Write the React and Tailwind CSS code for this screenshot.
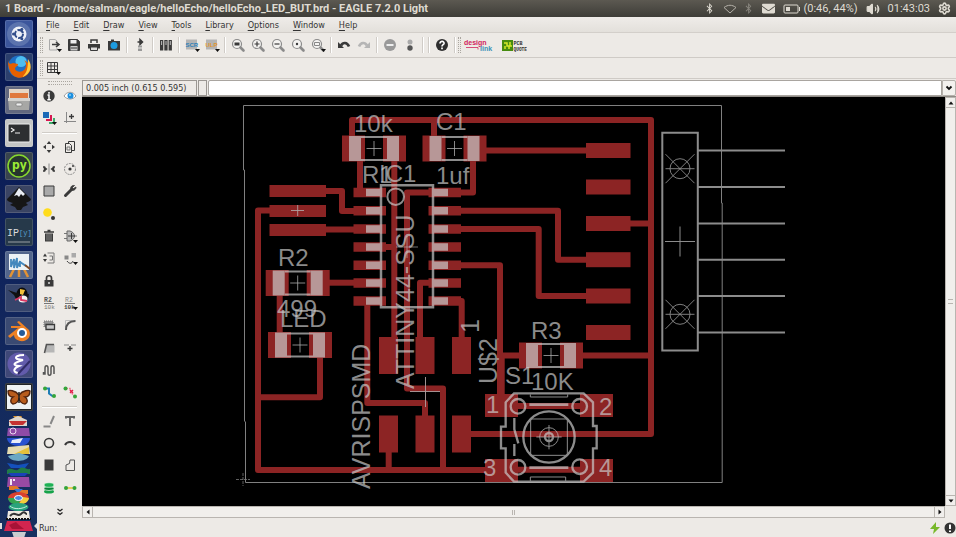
import { FaBluetoothB, FaEnvelope } from "react-icons/fa";
import { Settings, Volume2 } from "lucide-react";

const DARK = "#3a3a3a";
const COPPER = "#8c2424";
const SILK = "#cbcbcb";

const Glyph = ({ children }) => (
  <svg viewBox="0 0 16 16" className="size-4 shrink-0" fill="none" stroke={DARK}>
    {children}
  </svg>
);

// small triangle in the corner of buttons that open a menu
const Drop = () => <path d="M11 12h5l-2.500 3z" fill="#111" stroke="none" />;

const Lens = ({ children }) => (
  <Glyph>
    <g stroke="#8b8b8b">
      <circle cx="7" cy="7" r="4.500" fill="#f4f3f1" strokeWidth="1.200" />
      <path d="M10.500 10.500l3 3" strokeWidth="2.600" strokeLinecap="round" />
    </g>
    {children}
  </Glyph>
);

/* ---------- top toolbar ---------- */

const toolbar = [
  [
    ["Open", <Glyph><path d="M9 2.500H3.500v10.500H11V11M11 5V4L9 2.500" stroke="#aaa" /><path d="M6 7.500h6M10 5l3 2.500-3 2.500" strokeWidth="1.600" /><Drop /></Glyph>],
    ["Save", <Glyph><path d="M2.500 2.500h9l2 2v9h-11z" fill={DARK} /><path d="M4.500 3h6v3.500h-6z" fill="#eee" stroke="none" /><path d="M4.500 9h7v4.500h-7z" fill="#ccc" stroke="none" /><path d="M5 11h6" /></Glyph>],
    ["Print", <Glyph><path d="M5 6V3h6v3" fill="#eee" strokeWidth="1.500" /><path d="M2 7h12v4.500H2z" fill={DARK} stroke="none" /><path d="M4.500 10h7v3.500h-7z" fill="#ddd" /></Glyph>],
    ["CAM processor", <Glyph><path d="M2 4h3V2.500h3V4h6v9.500H2z" fill={DARK} stroke="none" /><circle cx="8" cy="8.500" r="3.500" fill="#1d9be0" stroke="none" /></Glyph>],
  ],
  [["Switch to schematic", <Glyph><path d="M5.500 5h4M8 2.500L10.500 5 8 7.500z" fill={DARK} strokeWidth="1.500" /><path d="M6 8.500h4v2H6zM6 11.500h4v2.500H6z" fill="#999" stroke="none" /></Glyph>]],
  [["Use library", <Glyph><path d="M2 3h3.300v10.500H2zM6.300 3h3.300v10.500H6.300zM10.600 3h3.300v10.500h-3.300z" fill={DARK} stroke="none" /><path d="M3.600 4v4M8 4v4M12.300 4v4" stroke="#bbb" /></Glyph>]],
  [
    ["Execute script", <Glyph><path d="M2 2.500h11v10H2z" fill="#b4b4b4" stroke="none" /><text x="1.500" y="10" fontSize="6" fontWeight="700" fill="#2c7fb8" stroke="none" fontFamily="Liberation Sans, sans-serif">SCR</text><Drop /></Glyph>],
    ["Run ULP", <Glyph><path d="M2 2.500h11v10H2z" fill="#b4b4b4" stroke="none" /><text x="1.500" y="10" fontSize="6" fontWeight="700" fill="#e2952b" stroke="none" fontFamily="Liberation Sans, sans-serif">ULP</text><Drop /></Glyph>],
  ],
  [
    ["Zoom to fit", <Lens><path d="M4.500 5.500h5v3h-5z" fill={DARK} stroke="none" /></Lens>],
    ["Zoom in", <Lens><path d="M4.500 7h5M7 4.500v5" strokeWidth="1.200" /></Lens>],
    ["Zoom out", <Lens><path d="M4.500 7h5" strokeWidth="1.200" /></Lens>],
    ["Redraw", <Lens><circle cx="7" cy="7" r="1.200" fill={DARK} stroke="none" /></Lens>],
    ["Select area", <Lens><path d="M4.500 5.500h5v3h-5z" stroke="#888" /><Drop /></Lens>],
  ],
  [
    ["Undo", <Glyph><path d="M5 8.500c2-3.500 6-3.500 8 1" strokeWidth="2.700" /><path d="M2 5v6h6z" fill={DARK} stroke="none" /></Glyph>],
    ["Redo", <Glyph><path d="M11 8.500c-2-3.500-6-3.500-8 1" stroke="#b5b5b5" strokeWidth="2.700" /><path d="M14 5v6H8z" fill="#b5b5b5" stroke="none" /></Glyph>],
  ],
  [
    ["Cancel", <Glyph><circle cx="8" cy="8" r="6" fill="#999" stroke="none" /><path d="M4.500 8h7" stroke="#eee" strokeWidth="2" /></Glyph>],
    ["Go", <Glyph><circle cx="8" cy="5" r="2.500" fill="#aaa" stroke="none" /><circle cx="8" cy="11" r="2.700" fill="#555" stroke="none" /></Glyph>],
  ],
  [],
  [["Help", <Glyph><circle cx="8" cy="8" r="6" fill="#2e2e2e" stroke="none" /><path d="M6 6.500c0-3 4.500-2.500 4 0-.3 1.300-2 1.200-2 3M8 10.500v1.800" stroke="#fff" strokeWidth="1.700" /></Glyph>]],
];

/* ---------- left palette ---------- */

const dot = (x, y, c = DARK, r = 1.7) => <circle cx={x} cy={y} r={r} fill={c} stroke="none" />;

const palette = [
  [
    ["Info", <Glyph><circle cx="8" cy="8" r="5.700" fill={DARK} stroke="none" /><path d="M8 4v1.800M6.500 7H8v4.500M6.300 11.700h3.500" stroke="#fff" strokeWidth="1.500" /></Glyph>],
    ["Show", <Glyph><path d="M2 8c3-5 9-5 12 0-3 4-9 4-12 0z" fill="#fff" stroke="#999" />{dot(8.5, 7.8, "#1a8fe0", 3)}{dot(8, 7, "#8fd0f5", 1)}</Glyph>],
    ["Display", <Glyph><path d="M2 2h6v6H2z" fill="#1b69b6" stroke="none" /><path d="M10 5v5H5" stroke="#d6174f" strokeWidth="2" /><path d="M13 8v5H8" stroke="#3eaa6b" strokeWidth="2" /><Drop /></Glyph>],
    ["Mark", <Glyph><path d="M4.500 2v11M2 11.500h12" stroke="#888" /><path d="M9.500 4v5M7 6.500h5" strokeWidth="1.300" /></Glyph>],
  ],
  [
    ["Move", <Glyph><path d="M8 2l2.300 3H5.700zM8 14l2.300-3H5.700zM2 8l3-2.300v4.600zM14 8l-3-2.300v4.600z" fill={DARK} stroke="none" /></Glyph>],
    ["Copy", <Glyph><path d="M6.500 2.500h6v9h-6z" /><path d="M3.500 4.500h4l2 2v7h-6z" fill="#eeebe7" /><path d="M5 8h3v3H5z" stroke="#777" /></Glyph>],
    ["Mirror", <Glyph><path d="M8 2.500v11" stroke="#888" /><path d="M2 6h1.500v4H2M14 6h-1.500v4H14" strokeWidth="1.500" /><path d="M4 6v4l2.500-2zM12 6v4L9.500 8z" fill={DARK} stroke="none" /></Glyph>],
    ["Rotate", <Glyph><circle cx="8" cy="8" r="5.500" stroke="#888" strokeDasharray="2 1" />{dot(8, 8, DARK, 1.6)}{dot(11, 5, DARK, 1)}</Glyph>],
    ["Group", <Glyph><path d="M3 3h10v10H3z" fill="#a9a9a9" /></Glyph>],
    ["Change", <Glyph><path d="M3.500 12.500l6-6" strokeWidth="3" strokeLinecap="round" /><path d="M12.500 2.500C9 2 8 5 9 7c2 1 5 0 5-3l-2.500 1.500-1-1z" fill={DARK} strokeWidth=".8" /></Glyph>],
    ["Paste", <Glyph>{dot(6.5, 6.5, "#ffdc1c", 4.3)}{dot(12, 12, "#333", 2)}</Glyph>],
    null,
    ["Delete", <Glyph><path d="M3 4h10M6.500 2.500h3" strokeWidth="1.600" /><path d="M4 5.500h8v8H4z" fill={DARK} stroke="none" /><path d="M6 6v6.500M8 6v6.500M10 6v6.500" stroke="#aaa" strokeWidth=".7" /></Glyph>],
    ["Add", <Glyph><path d="M2 5.500h4M2 10.500h4M12 8h3" stroke="#777" /><path d="M5 3h3c6 2 6 8 0 10H5z" fill="#bbb" stroke="#666" /><path d="M6 8h7M9.500 5v6" /><Drop /></Glyph>],
    ["Pinswap", <Glyph><path d="M4 3.500l2 3H2zM4 12l2-3H2z" fill={DARK} stroke="none" /><path d="M6.500 3H13v10H6.500M8.500 6h3v4h-3" stroke="#777" /></Glyph>],
    ["Replace", <Glyph><path d="M2.500 5.500h4v4h-4z" fill="#888" stroke="none" /><path d="M9.500 3h4.500v4.500H9.500z" fill="#aaa" stroke="none" /><path d="M5 11c2 3 5 3 6 0" /><Drop /></Glyph>],
    ["Lock", <Glyph><path d="M5.500 7V5c0-3 5-3 5 0v2" strokeWidth="1.700" /><path d="M3.500 7h9v6.500h-9z" fill={DARK} stroke="none" />{dot(8, 10, "#ddd", 1)}</Glyph>],
    null,
    ["Name", <Glyph><text x="3" y="7" fontSize="6.500" fontWeight="700" fill="#555" stroke="none" fontFamily="Liberation Mono, monospace">R2</text><path d="M3 8.500h10" stroke="#777" /><text x="3" y="14" fontSize="6" fill="#777" stroke="none" fontFamily="Liberation Mono, monospace">10k</text></Glyph>],
    ["Value", <Glyph><text x="3" y="7" fontSize="6.500" fill="#888" stroke="none" fontFamily="Liberation Mono, monospace">R2</text><path d="M3 8.500h10" stroke="#777" /><text x="2" y="14" fontSize="6" fontWeight="700" fill="#444" stroke="none" fontFamily="Liberation Mono, monospace">10k</text><Drop /></Glyph>],
    ["Smash", <Glyph><path d="M3 4h9v6H3z" fill="#999" stroke="#777" strokeDasharray="1 1" /><path d="M5 7.500h8.500v5H5z" fill="#c9c9c9" strokeWidth="1.300" /></Glyph>],
    ["Miter", <Glyph><path d="M3.500 13V3.500H13" stroke="#bbb" /><path d="M4 13c0-6 3-9 9.500-9" strokeWidth="2" stroke="#555" /></Glyph>],
    ["Split", <Glyph><path d="M5.500 4.500h8v8h-9z" fill="#b6b6b6" stroke="none" /><path d="M3.500 13l2-8.500H13" strokeWidth="1.600" stroke="#555" /></Glyph>],
    ["Optimize", <Glyph><path d="M2 5h5M9 5h5" stroke="#888" /><path d="M8 6v5M5.500 8.500h5" strokeWidth="1.400" /></Glyph>],
    ["Meander", <Glyph><path d="M2.500 10v2H4V6c0-3 3-3 3 0v5c0 3 3 3 3 0V6c0-3 3-3 3 0v6" strokeWidth="1.500" stroke="#555" /></Glyph>],
    null,
    ["Route", <Glyph><path d="M4 4.500h4v5l4 3" stroke="#1f7db5" strokeWidth="2" />{dot(4, 4.5, "#34a53a", 2)}{dot(13, 12, "#34a53a", 2)}</Glyph>],
    ["Ripup", <Glyph><path d="M4 4.500h4l1 4 4 4" stroke="#ee7d93" strokeWidth="1.500" strokeDasharray="2 1" />{dot(3.5, 4.5, "#34a53a", 2)}{dot(13, 12.5, "#34a53a", 2)}<path d="M8 6l3 3M11 6l-3 3" stroke="#e21c48" strokeWidth="1.400" /></Glyph>],
  ],
  [
    ["Wire", <Glyph><path d="M2.500 13.500h7" stroke="#888" strokeWidth="2" /><path d="M9.500 11l3.500-8" stroke="#888" strokeWidth="2" /></Glyph>],
    ["Text", <Glyph><path d="M4 5.500V4h8v1.500M8 4v9" strokeWidth="2" stroke="#666" /></Glyph>],
    ["Circle", <Glyph><circle cx="8" cy="8" r="4.500" strokeWidth="1.600" /></Glyph>],
    ["Arc", <Glyph><path d="M3 10c2-4 8-4 10 0" strokeWidth="2" /></Glyph>],
    ["Rect", <Glyph><path d="M3.500 2.500h9v11h-9z" fill={DARK} stroke="none" /></Glyph>],
    ["Polygon", <Glyph><path d="M4 13.500V8l3.500-1.500L8 3h4.500v10.500z" stroke="#555" /></Glyph>],
    ["Via", <Glyph><ellipse cx="8" cy="11.500" rx="5" ry="2" fill="#16a34a" stroke="none" /><ellipse cx="8" cy="8.500" rx="5" ry="2" fill="#0c8439" stroke="#e8f5e8" strokeWidth=".7" /><ellipse cx="8" cy="5" rx="5" ry="2.300" fill="#1fb155" stroke="#e8f5e8" strokeWidth=".7" /></Glyph>],
    ["Signal", <Glyph><path d="M4 8h8" stroke="#e4c22c" strokeWidth="1.500" />{dot(4, 8, "#34a53a", 2)}{dot(12.5, 8, "#34a53a", 2)}</Glyph>],
  ],
];

/* ---------- launcher ---------- */

const Tile = ({ children }) => (
  <svg viewBox="0 0 28 28" className="size-7">{children}</svg>
);

const launcher = [
  ["Dash", "bg-[#3c569c]", <Tile><circle cx="14" cy="14" r="12" fill="#5b73ad" /><circle cx="14" cy="14" r="7.500" fill="#eef1f8" /><circle cx="14" cy="14" r="4" fill="none" stroke="#314d8a" strokeWidth="2" strokeDasharray="7 1.400" /><circle cx="8.500" cy="14" r="1.500" fill="#314d8a" /><circle cx="16.800" cy="9.200" r="1.500" fill="#314d8a" /><circle cx="16.800" cy="18.800" r="1.500" fill="#314d8a" /></Tile>],
  ["Firefox", "bg-[#2b3f6d]", <Tile><circle cx="14" cy="13.500" r="11" fill="#1f6fc4" /><circle cx="16" cy="8.500" r="5.500" fill="#4dbdf0" /><path d="M3 6c0 6 3 5 5 4l5 1c0 3-3 2-3 5 2 4 8 3 10 0 2-4 1-7-1-9 8 4 8 11 3 15-6 5-14 3-17-4-2-4-2-8-2-12z" fill="#e66000" /><path d="M23 6c5 7 3 15-6 18 5-4 6-9 6-18z" fill="#ffcb3d" /></Tile>],
  ["Files", "bg-[#62687f]", <Tile><path d="M4 3h20v10H4z" fill="#e5d6c5" /><path d="M5 7h18v6H5z" fill="#e0783c" /><path d="M3 12h22l-1 12H4z" fill="#a7a7a5" /><path d="M3 12h22v3H3z" fill="#d3d2cf" /><rect x="11" y="17" width="6" height="3" rx="1" fill="#eee" stroke="#777" strokeWidth=".7" /></Tile>],
  ["Terminal", "bg-[#c4c5c4]", <Tile><rect x="3" y="5" width="22" height="18" rx="1" fill="#2d2f31" stroke="#eee" /><path d="M6 9l3 2-3 2M10 14h5" fill="none" stroke="#eee" strokeWidth="1.200" /></Tile>],
  ["Python editor", "bg-[#38444e]", <Tile><circle cx="14" cy="14" r="11" fill="#26352d" stroke="#87d82e" strokeWidth="1.500" /><text x="7" y="17" fontSize="12" fontWeight="700" fill="#9bea35" fontFamily="DejaVu Sans Condensed, DejaVu Sans, sans-serif">py</text></Tile>],
  ["Inkscape", "bg-[#3a4463]", <Tile><path d="M14 2l12 12c0 3-5 3-5 4l2 2-5 2-2 3h-4l-2-3-5-2 3-2c-2-1-6-1-6-4z" fill="#161616" /><path d="M14 3l6 6-2 2-2-2-2 3-2-2-3 1z" fill="#e9edf3" /></Tile>],
  ["IPython", "bg-[#26394a]", <Tile><text x="2" y="18" fontSize="10" fill="#ddd" fontFamily="Liberation Mono, monospace">IP</text><text x="14" y="17" fontSize="7" fill="#58a0cc" fontFamily="Liberation Mono, monospace">[y]</text><path d="M3 24h22" stroke="#ccc" strokeWidth=".7" /></Tile>],
  ["Paint", "bg-[#53668c]", <Tile><path d="M9 18l-4 8M19 18l4 8M14 18v8" stroke="#e39334" strokeWidth="2.500" /><path d="M4 3h20v16H4z" fill="#edf2f5" /><path d="M6 8v8l3-8v9l3-10v10l3-7v6" fill="none" stroke="#4388bd" strokeWidth="1.800" /><path d="M15 11l6 4" stroke="#4388bd" strokeWidth="2" /><path d="M20 14l5 4" stroke="#7e4a26" strokeWidth="2" /></Tile>],
  ["Tux", "bg-[#36456c]", <Tile><ellipse cx="17" cy="10" rx="5.500" ry="6.500" fill="#0b0b0b" /><path d="M3 6l9 3 12 1-1 6-12-1-2-4z" fill="#111" /><ellipse cx="18" cy="15" rx="4.500" ry="3.500" fill="#f3f3f3" /><path d="M15 5l5 1-2 5-3-1z" fill="#f2c13b" /><path d="M10 16l6-3v3l6 1" stroke="#d93864" strokeWidth="1.800" fill="none" /></Tile>],
  ["Blender", "bg-[#3a4a72]", <Tile><path d="M3 19l10-8H6V9h10l-4-4 2-1 10 9c3 7-2 12-9 11-4-1-6-3-6-6l-4 3z" fill="#ee8124" /><circle cx="17" cy="16" r="5" fill="#fff" /><circle cx="17" cy="16" r="3" fill="#245b99" /></Tile>],
  ["Emacs", "bg-[#3f4878]", <Tile><circle cx="14" cy="14" r="11.500" fill="#625bab" /><path d="M19 5c-6 0-10 2-7 4l6 1c-10 3-11 5-4 6-5 2-7 6-1 7" fill="none" stroke="#fff" strokeWidth="2" /><path d="M13 24l12-13" stroke="#302b66" strokeWidth="2" /></Tile>],
  ["Butterfly", "bg-[#202428]", <Tile><path d="M2 2h24v24H2z" fill="#eef2f4" /><path d="M14 12C10 7 4 7 3 8c0 4 2 6 5 6-3 2-3 6 0 7 3 0 6-3 6-6 0 3 3 6 6 6 3-1 3-5 0-7 3 0 5-2 5-6-1-1-7-1-11 4z" fill="#b85c1c" stroke="#50240f" strokeWidth="1.400" /><path d="M14 9v11" stroke="#222" strokeWidth="1.500" /></Tile>],
];

// folded launcher icons, drawn from the top of the pile to the trash can
const Pile = () => (
  <svg viewBox="0 411 37 126" className="min-h-0 w-full flex-1" preserveAspectRatio="xMidYMax slice">
    <path d="M13 416l4-5h3l2 7-4 4z" fill="#dd952d" />
    <path d="M9 420l9-4 9 4v6H9z" fill="#ded7cc" />
    <path d="M9 421h18l-4 4H12z" fill="#c53232" />
    <path d="M8 428h21l1 8H7z" fill="#8e4ba6" />
    <circle cx="13" cy="431" r="3" fill="none" stroke="#ead8f0" />
    <path d="M7 438h23c0 5-5 8-11 8s-12-3-12-8z" fill="#2852d0" />
    <path d="M12 440l11-2-3 5h-9z" fill="#e8edf7" />
    <path d="M8 447l21-2 1 9H7z" fill="#e5dbb0" />
    <path d="M14 454l15-7v7z" fill="#e5c13b" />
    <path d="M8 456l11-3 10 3c-2 6-18 7-21 0z" fill="#6aa8c4" />
    <path d="M7 463l11 2 11-2-4 5H11z" fill="#1450bd" />
    <path d="M7 470c5-4 8 3 12-1s7 1 11 0v5H7z" fill="#207b47" />
    <path d="M8 473h20l-3 3H11z" fill="#1b41b7" />
    <path d="M8 477h21l1 10H7z" fill="#9a4aa3" />
    <path d="M11 479v6M14 479v2" stroke="#f4e8f5" strokeWidth="2" />
    <path d="M9 488h7l4 4h8" stroke="#e17928" strokeWidth="4" fill="none" />
    <path d="M14 489h9l-5 4z" fill="#3578dc" />
    <ellipse cx="18.500" cy="498" rx="10.500" ry="6" fill="#d9402e" />
    <path d="M8 498c1 7 9 7 11 5l3-5z" fill="#35a451" />
    <path d="M29 498c-1 5-6 7-10 6l4-7z" fill="#f3ce3b" />
    <ellipse cx="18.500" cy="498" rx="4" ry="2.500" fill="#4a87df" stroke="#fff" />
    <ellipse cx="18.500" cy="507" rx="10" ry="4" fill="#2aa37c" />
    <path d="M10 506c4 4 13 3 17 0" stroke="#c5ecdf" fill="none" />
    <path d="M8 511h21l1 8H7z" fill="#eeeae0" />
    <path d="M10 516c5-6 7 2 11-2s4 0 6 0" stroke="#333" strokeWidth="2" fill="none" />
    <path d="M6 519h25" stroke="#111" strokeWidth="2" strokeDasharray="2 1" />
    <path d="M7 521h23l3 10H4z" fill="#d3254f" />
    <path d="M9 525l7-3 3 3 5 4H12z" fill="#a81236" />
    <path d="M12 532h14l-2 6H14z" fill="#c9ccd0" />
    <path d="M37 523v6l-3-3zM0 523h2v6H0z" fill="#ddd" />
  </svg>
);

/* ---------- board drawing ---------- */

const traces = [
  "M352 146V120H651V434H462", "M434 120V146", "M484 150.500H588", "M473 158V192.500H450",
  "M436 192.500H407V388.500H443V470", "M360 158V192.500", "M394.300 158V342", "M394 247H380",
  "M324 191H342V211H358", "M272 210.500H258V470H490", "M324 229.500H358", "M326 282.700H358",
  "M279.700 290V337", "M320 354V397.300H258", "M455 210.700H558V259.700H590", "M455 229H538.700V296H590",
  "M455 265.300H500V398", "M501.700 398V355.500H524", "M436 282.700H420V342", "M455 301H461.700V342",
  "M367.300 301V403H425V420", "M388.700 450V470", "M628 223.500H651", "M580 355.500H651",
  "M512 406H586", "M512 469.700H586",
];

const pinRows = [192.5, 210.7, 229, 247, 265.3, 283, 301];
const headerRows = [150.5, 187, 223.5, 259.7, 296, 332.5];
const chips = [[374, 148.5], [454.5, 148.5], [297.7, 283], [300, 345], [551, 355.5]];

const Chip = ({ x, y }) => (
  <g>
    <path d={`M${x - 32} ${y - 13}h23v26h-23zM${x + 9} ${y - 13}h23v26h-23z`} fill={COPPER} />
    <g opacity=".69">
      <path d={`M${x - 25} ${y - 12.5}h12v25h-12zM${x + 13} ${y - 12.5}h12v25h-12z`} fill={SILK} />
      <path d={`M${x - 13} ${y - 11.5}h26M${x - 13} ${y + 11.5}h26`} stroke={SILK} strokeWidth="2" />
    </g>
    <path d={`M${x - 7.5} ${y}h15M${x} ${y - 7.5}v15`} stroke="#aaa" strokeWidth=".8" />
  </g>
);

const labels = [
  ["10k", 354, 132], ["C1", 436, 130], ["R1", 362, 183], ["IC1", 379, 182], ["1uf", 436, 184],
  ["R2", 278, 266], ["499", 277, 317], ["LED", 280, 327], ["R3", 531, 339], ["S1", 505, 384],
  ["10K", 531, 390], ["1", 486, 413], ["2", 599, 415], ["3", 483, 476], ["4", 599, 476],
];

const uprights = [["AVRISPSMD", 370, 489], ["ATTINY44-SSU", 414, 389], ["U$2", 497, 384], ["1", 479, 333]];

const Board = () => (
  <svg
    viewBox="82 97 863 409"
    className="size-full"
    fill="none"
    fontFamily="'Liberation Sans', sans-serif"
    role="img"
    aria-label="Board layout"
  >
    <path d="M243.500 105.500H721.500V203l.700 0V482.500H245.500V422L244.500 421V170l-1 0z" stroke="#808080" />
    <path d="M236 479.500h14M243 473v13" stroke="#777" strokeDasharray="3 1" strokeWidth=".8" />

    <g stroke={COPPER} strokeWidth="6" strokeLinejoin="round">
      {traces.map((d) => <path key={d} d={d} />)}
    </g>
    <g fill={COPPER}>
      {[185, 205, 224].map((y) => <rect key={y} x="269.500" y={y} width="56.500" height="12" />)}
      {headerRows.map((y) => <rect key={y} x="586" y={y - 7.5} width="44.500" height="15" />)}
      {[379, 415.5, 452].map((x) => (
        <path key={x} d={`M${x} 337h19v37h-19zM${x} 415.500h19v37h-19z`} />
      ))}
      {pinRows.map((y) => (
        <path key={y} d={`M353.500 ${y - 4.7}h32.500v9.400h-32.500zM428.500 ${y - 4.7}h32.500v9.400h-32.500z`} />
      ))}
      <path d="M485 394h33v23h-33zM580 394h33v23h-33zM485 459h33v23h-33zM580 459h33v23h-33z" />
    </g>
    {chips.map(([x, y]) => <Chip key={`${x}-${y}`} x={x} y={y} />)}

    {/* IC1 */}
    <g opacity=".69">
      {pinRows.map((y) => (
        <path key={y} d={`M366 ${y - 3.7}h15v7.400h-15zM433 ${y - 3.7}h15v7.400h-15z`} fill={SILK} />
      ))}
      <path d="M381 185.300h52v122h-52z" stroke={SILK} strokeWidth="2.500" />
      <circle cx="395.700" cy="196.700" r="8.300" stroke={SILK} strokeWidth="2" />
      <path d="M396 247h22M407 236v22" stroke={SILK} strokeWidth=".8" />
    </g>

    <path d="M410 391.500h30M425.500 377v30M291 210.500h13M297.700 205v11" stroke="#b0a0a0" strokeWidth=".9" />

    {/* pin header */}
    <g stroke="#8c8c8c">
      <path d="M662.300 132.700h35.500v217.800h-35.500z" strokeWidth="2" />
      {headerRows.map((y) => <path key={y} d={`M698 ${y}h87`} strokeWidth="2" />)}
      {[168.7, 314.3].map((y) => (
        <g key={y} strokeWidth=".9">
          <circle cx="680" cy={y} r="10" />
          <path d={`M665.500 ${y}h29M665.500 ${y - 14.5}l29 29M665.500 ${y + 14.5}l29-29`} />
        </g>
      ))}
      <path d="M665 241.500h30M680 226.500v30" />
    </g>

    {/* push button S1 */}
    <g transform="translate(400 300) scale(.33333)" stroke={SILK} strokeWidth="7" opacity=".69">
      <path d="M342 280H551L579 307V378H590V445H579V518L551 545H342L317 518V445H303V380H317V307z" />
      <circle cx="354" cy="319" r="22" />
      <circle cx="539" cy="319" r="22" />
      <circle cx="354" cy="502" r="22" />
      <circle cx="539" cy="500" r="22" />
      <circle cx="447" cy="411" r="77" />
      <circle cx="447" cy="411" r="28" strokeWidth="3" />
      <circle cx="447" cy="411" r="12" strokeWidth="7" />
      <path d="M392 357H502V466H392zM391 283V291H503V283M391 545V531H497V545M409 411H485M447 375V448" strokeWidth="3" />
      <path d="M388 314H505M388 503H505" strokeWidth="8" />
      <path d="M343 354V388L355 430M343 432V468" />
    </g>

    <g fill={SILK} fillOpacity=".69" fontSize="24">
      {labels.map(([t, x, y]) => <text key={`${t}${x}`} x={x} y={y}>{t}</text>)}
    </g>
    <g fill={SILK} fillOpacity=".69" fontSize="25">
      {uprights.map(([t, x, y]) => (
        <text key={t} transform={`translate(${x} ${y}) rotate(-90)`}>{t}</text>
      ))}
    </g>
  </svg>
);

/* ---------- window chrome ---------- */

const Grip = () => <span className="h-4 w-[3px] border-x border-dotted border-[#aaa6a0]" />;
const Divider = () => <span className="mx-[2px] h-4 w-[2px] border-l border-[#d0ccc7] bg-white" />;

const TitleBar = () => (
  <header className="flex h-[17px] shrink-0 items-center justify-between bg-linear-to-b from-[#5c5951] to-[#3e3d38] px-[5px] font-['Roboto','Noto_Sans',sans-serif] text-[11px] leading-4 whitespace-nowrap text-[#dfdbd2]">
    <h1 className="font-bold">
      1 Board - /home/salman/eagle/helloEcho/helloEcho_LED_BUT.brd - EAGLE 7.2.0 Light
    </h1>
    <div className="flex items-center">
      <FaBluetoothB className="size-[11px]" />
      <svg viewBox="0 0 14 10" className="ml-2 h-[10px] w-[14px]" fill="none" stroke="#b5b1a9"><path d="M1 3.500c4-3 8-3 12 0L7 9z" /></svg>
      <FaBluetoothB className="ml-[6px] size-[11px] opacity-40" />
      <FaEnvelope className="ml-2 size-[13px]" />
      <svg viewBox="0 0 18 10" className="ml-2 h-[10px] w-[18px]" fill="none" stroke="#dfdbd2"><rect x="1" y="1" width="14" height="8" rx="1" /><path d="M3 3h4v4H3z" fill="#dfdbd2" stroke="none" /><path d="M16.500 3v4" /></svg>
      <span className="ml-[2px]">(0:46, 44%)</span>
      <Volume2 className="ml-2 size-[14px]" fill="currentColor" strokeWidth={2} />
      <span className="ml-2">01:43:03</span>
      <Settings className="ml-2 size-[13px]" strokeWidth={3} />
    </div>
  </header>
);

const menus = ["File", "Edit", "Draw", "View", "Tools", "Library", "Options", "Window", "Help"];

const Launcher = () => (
  <aside className="flex w-[37px] shrink-0 flex-col items-center gap-[5px] overflow-hidden bg-linear-to-b from-[#071650] via-[#10245c] to-[#18305f] pt-[3px]">
    {launcher.map(([name, bg, art]) => (
      <button key={name} aria-label={name} className={`size-7 shrink-0 rounded-xs shadow-[inset_0_0_0_1px_#ffffff22] ${bg}`}>
        {art}
      </button>
    ))}
    <Pile />
  </aside>
);

const Palette = () => (
  <nav aria-label="Commands" className="flex w-[45px] shrink-0 flex-col px-[2px]">
    <span className="mx-auto mt-[2px] h-[4px] w-6 border-y border-dotted border-[#aaa6a0]" />
    {palette.map((group, i) => (
      <div key={i} className="contents">
        {i > 0 && <span className="mx-[3px] my-[2px] h-[2px] border-t border-[#d0ccc7] bg-white" />}
        {Array.from({ length: group.length / 2 }, (_, r) => (
          <div key={r} className="grid min-h-0 flex-1 grid-cols-2 items-center justify-items-center">
            {group.slice(r * 2, r * 2 + 2).map((tool, c) =>
              tool ? <button key={c} aria-label={tool[0]}>{tool[1]}</button> : <span key={c} />
            )}
          </div>
        ))}
      </div>
    ))}
    <button aria-label="More commands" className="flex h-[19px] items-center justify-center pt-2">
      <svg viewBox="0 0 8 8" className="size-2" fill="none" stroke="#222" strokeWidth="1.300"><path d="M1.500 1L4 3l2.500-2M1.500 4.500l2.500 2 2.500-2" /></svg>
    </button>
  </nav>
);

const Arrow = ({ d }) => (
  <svg viewBox="0 0 8 8" className="size-2" fill="#111"><path d={d} /></svg>
);

const App = () => (
  <div className="flex h-screen flex-col overflow-hidden bg-[#edeae6] font-['DejaVu_Sans_Condensed','DejaVu_Sans',sans-serif] text-[9px] text-[#333]">
    <TitleBar />
    <div className="flex min-h-0 flex-1">
      <Launcher />
      <main className="flex min-w-0 flex-1 flex-col">
        <nav className="flex h-4 shrink-0 items-center border-b border-[#d3cfca] bg-linear-to-b from-[#efece9] to-[#e3e0db] pt-px pl-[2px]">
          {menus.map((m) => (
            <button key={m} className="px-[7px] leading-[14px]">
              <span className="underline underline-offset-2">{m[0]}</span>{m.slice(1)}
            </button>
          ))}
        </nav>

        <div className="flex h-[25px] shrink-0 items-center border-b border-[#cfcbc6] pl-[3px]">
          <Grip />
          <span className="w-px" />
          {toolbar.map((group, i) => (
            <div key={i} className="flex items-center">
              {i > 0 && <Divider />}
              {group.map(([name, icon]) => (
                <button key={name} aria-label={name} className="flex w-5 justify-center">{icon}</button>
              ))}
            </div>
          ))}
          <Divider />
          <Grip />
          <a href="#design-link" aria-label="design link" className="ml-[2px] block">
            <svg viewBox="0 0 30 16" className="h-4 w-[30px]" fontFamily="Liberation Sans, sans-serif">
              <text x="1" y="8" fontSize="7" fill="#d0245c" fontWeight="700">design</text>
              <text x="17" y="14" fontSize="7" fill="#3b93b8" fontWeight="700">link</text>
              <path d="M3 10.500h12v2" stroke="#d0245c" strokeWidth=".8" fill="none" />
            </svg>
          </a>
          <a href="#pcb-quote" aria-label="PCB quote" className="ml-2 block">
            <svg viewBox="0 0 26 16" className="h-4 w-[26px]" fontFamily="Liberation Mono, monospace">
              <path d="M1 3h11v11H1z" fill="#478c10" />
              <path d="M3 6h3v3h3V5M4 12V9M8 12V9h3" stroke="#d6e92a" strokeWidth="1.500" fill="none" />
              <text x="12.500" y="8" fontSize="5" fill="#333" fontWeight="700">PCB</text>
              <text x="12.500" y="14" fontSize="4.500" fill="#333" fontWeight="700">QUOTE</text>
            </svg>
          </a>
        </div>

        <div className="flex h-[21px] shrink-0 items-center border-b border-[#cfcbc6] pl-[3px]">
          <Grip />
          <button aria-label="Grid" className="ml-[2px]">
            <Glyph><path d="M2.500 2.500h10v10h-10zM6 2.500v10M9.500 2.500v10M2.500 6h10M2.500 9.500h10" /><Drop /></Glyph>
          </button>
        </div>

        <div className="flex min-h-0 flex-1">
          <Palette />
          <section className="flex min-w-0 flex-1 flex-col">
            <div className="flex h-[18px] shrink-0 items-stretch border-b border-[#8f8b86] pt-px">
              <output className="w-[115px] border border-[#9b9792] pl-[3px] leading-[14px] whitespace-nowrap">
                0.005 inch (0.615 0.595)
              </output>
              <span className="ml-px w-[9px] border border-[#9b9792]" />
              <input aria-label="Command line" className="ml-px min-w-0 flex-1 rounded-l-xs border border-[#a9a5a0] bg-white px-1 outline-none" />
              <button aria-label="Command history" className="flex w-[14px] items-center justify-center rounded-r-xs border border-[#b5b1ac] bg-[#f3f1ee]">
                <svg viewBox="0 0 8 8" className="size-2" fill="none" stroke="#111" strokeWidth="1.800"><path d="M1.500 2.500L4 5l2.500-2.500" /></svg>
              </button>
            </div>
            <div className="flex min-h-0 flex-1">
              <div className="min-w-0 flex-1 bg-black"><Board /></div>
              <div className="flex w-[11px] flex-col items-center border border-[#b9b5b0] bg-[#f1efec]">
                <button aria-label="Scroll up" className="flex h-[10px] w-full items-center justify-center border-b border-[#b9b5b0]"><Arrow d="M4 2.500l2.500 3h-5z" /></button>
                <span className="flex flex-1 items-center"><span className="h-[5px] w-[5px] border-y border-[#b9b5b0]" /></span>
                <button aria-label="Scroll down" className="flex h-[10px] w-full items-center justify-center border-t border-[#b9b5b0]"><Arrow d="M4 5.500l2.500-3h-5z" /></button>
              </div>
            </div>
            <div className="mr-[11px] flex h-3 shrink-0 items-center border border-[#b9b5b0] bg-[#f1efec]">
              <button aria-label="Scroll left" className="flex h-full w-[10px] items-center justify-center border-r border-[#b9b5b0]"><Arrow d="M2.500 4l3-2.500v5z" /></button>
              <span className="flex flex-1 justify-center"><span className="h-[5px] w-[3px] border-x border-[#b9b5b0]" /></span>
              <button aria-label="Scroll right" className="flex h-full w-[10px] items-center justify-center border-l border-[#b9b5b0]"><Arrow d="M5.500 4l-3-2.500v5z" /></button>
            </div>
          </section>
        </div>

        <footer className="flex h-[19px] shrink-0 items-center justify-between pl-[2px] leading-4">
          <span>Run:</span>
          <span className="flex items-center gap-[3px]">
            <svg viewBox="0 0 12 14" className="h-[14px] w-3" fill="#78b82a"><path d="M7 1L1 8h4l-1 5 7-7H7z" /></svg>
            <svg viewBox="0 0 12 12" className="size-3"><circle cx="6" cy="6" r="5.500" fill="#333" /><path d="M6 2.500v4.500M6 8.500v1.500" stroke="#fff" strokeWidth="2" /></svg>
          </span>
        </footer>
      </main>
    </div>
  </div>
);

export default App;
